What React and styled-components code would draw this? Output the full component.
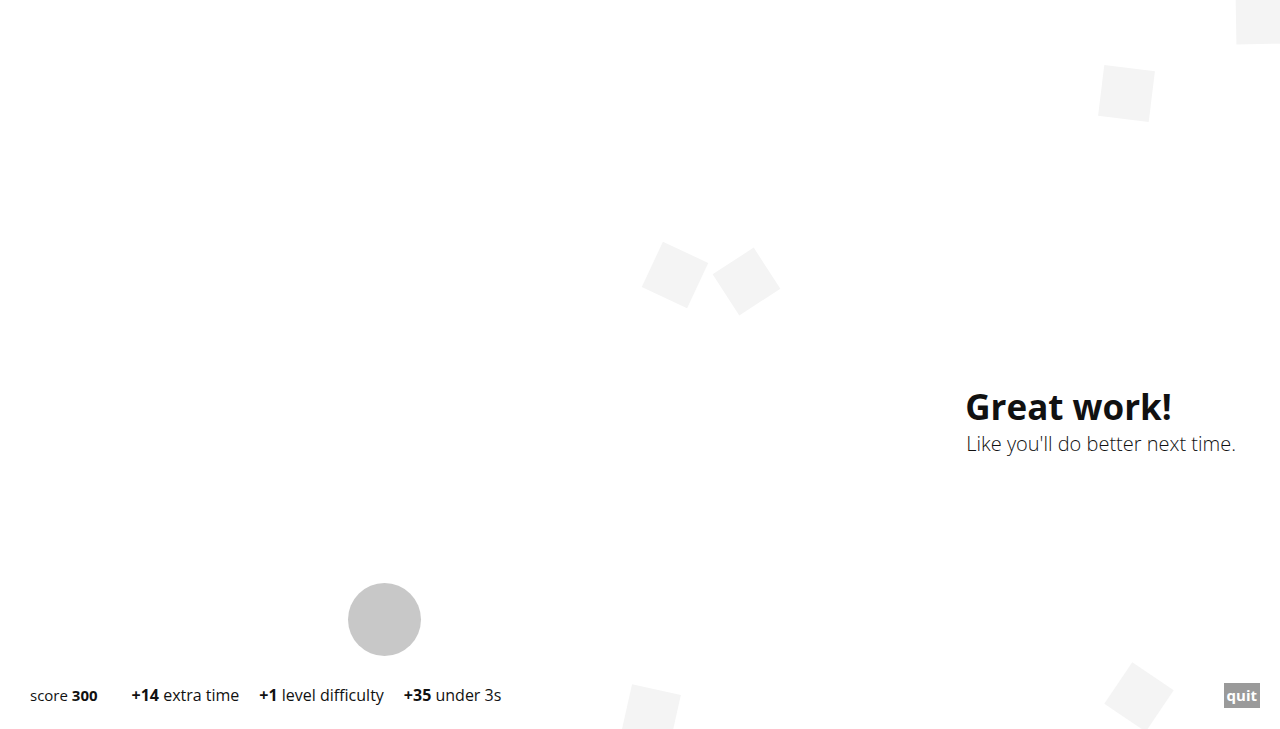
import React from "react";
import styled, { createGlobalStyle } from "styled-components";

// floating confetti squares, placed by their centre on the free canvas
const squares = [
  { x: 1261, y: 19, size: 50, rot: -1 },
  { x: 1126, y: 93, size: 51, rot: 7 },
  { x: 675, y: 275, size: 50, rot: 25 },
  { x: 746, y: 281, size: 49, rot: -33 },
  { x: 1139, y: 697, size: 50, rot: 34 },
  { x: 651, y: 714, size: 50, rot: 12.6 },
];

const bonuses = [
  { value: "+14", label: "extra time" },
  { value: "+1", label: "level difficulty" },
  { value: "+35", label: "under 3s" },
];

function App() {
  return (
    <>
      <GlobalStyle />
      <Stage>
        {squares.map((s, i) => (
          <Square key={i} $x={s.x} $y={s.y} $size={s.size} $rot={s.rot} />
        ))}
        <Ball $x={384.5} $y={619.5} $size={73} />
        <Main>
          <Message>
            <Title>Great work!</Title>
            <Subtitle>Like you'll do better next time.</Subtitle>
          </Message>
        </Main>
        <Footer>
          <Score>
            score <b>300</b>
          </Score>
          <Bonuses>
            {bonuses.map((b) => (
              <Bonus key={b.label}>
                <b>{b.value}</b> {b.label}
              </Bonus>
            ))}
          </Bonuses>
          <QuitButton>quit</QuitButton>
        </Footer>
      </Stage>
    </>
  );
}

const GlobalStyle = createGlobalStyle`
  html, body {
    margin: 0;
    padding: 0;
    background: #fff;
  }
  body {
    font-family: "Open Sans", "Liberation Sans", sans-serif;
    color: #111;
  }
`;

const Stage = styled.div`
  position: relative;
  width: 100%;
  height: 100vh;
  overflow: hidden;
  display: flex;
  flex-direction: column;
  background: #fff;
`;

const Square = styled.div`
  position: absolute;
  left: ${({ $x, $size }) => $x - $size / 2}px;
  top: ${({ $y, $size }) => $y - $size / 2}px;
  width: ${({ $size }) => $size}px;
  height: ${({ $size }) => $size}px;
  background: #f4f4f4;
  transform: rotate(${({ $rot }) => $rot}deg);
`;

const Ball = styled.div`
  position: absolute;
  left: ${({ $x, $size }) => $x - $size / 2}px;
  top: ${({ $y, $size }) => $y - $size / 2}px;
  width: ${({ $size }) => $size}px;
  height: ${({ $size }) => $size}px;
  border-radius: 50%;
  background: #c8c8c8;
`;

const Main = styled.main`
  position: relative;
  flex: 1;
  display: flex;
  justify-content: flex-end;
  align-items: flex-start;
  padding: 386px 44px 0 0;
`;

const Message = styled.div`
  display: flex;
  flex-direction: column;
  gap: 3px;
`;

const Title = styled.h1`
  margin: 0 0 0 -1px;
  font-size: 35px;
  line-height: 42px;
  font-weight: 700;
  color: #111;
`;

const Subtitle = styled.p`
  margin: 0;
  font-size: 20px;
  line-height: 26px;
  font-weight: 300;
  color: #111;
`;

const Footer = styled.footer`
  position: relative;
  height: 68px;
  display: flex;
  align-items: center;
  padding: 0 20px 0 30px;
  line-height: 20px;
  color: #111;

  b {
    font-weight: 700;
  }
`;

const Score = styled.div`
  font-size: 15px;
  margin-right: 34px;
`;

const Bonuses = styled.div`
  display: flex;
  gap: 20px;
  flex: 1;
  font-size: 16px;
`;

const Bonus = styled.span``;

const QuitButton = styled.button`
  height: 25px;
  padding: 0 3px;
  border: none;
  border-radius: 0;
  background: #9a9a9a;
  color: #fff;
  font-family: "Open Sans", "Liberation Sans", sans-serif;
  font-size: 15px;
  font-weight: 700;
  line-height: 25px;
  cursor: pointer;
`;

export default App;
